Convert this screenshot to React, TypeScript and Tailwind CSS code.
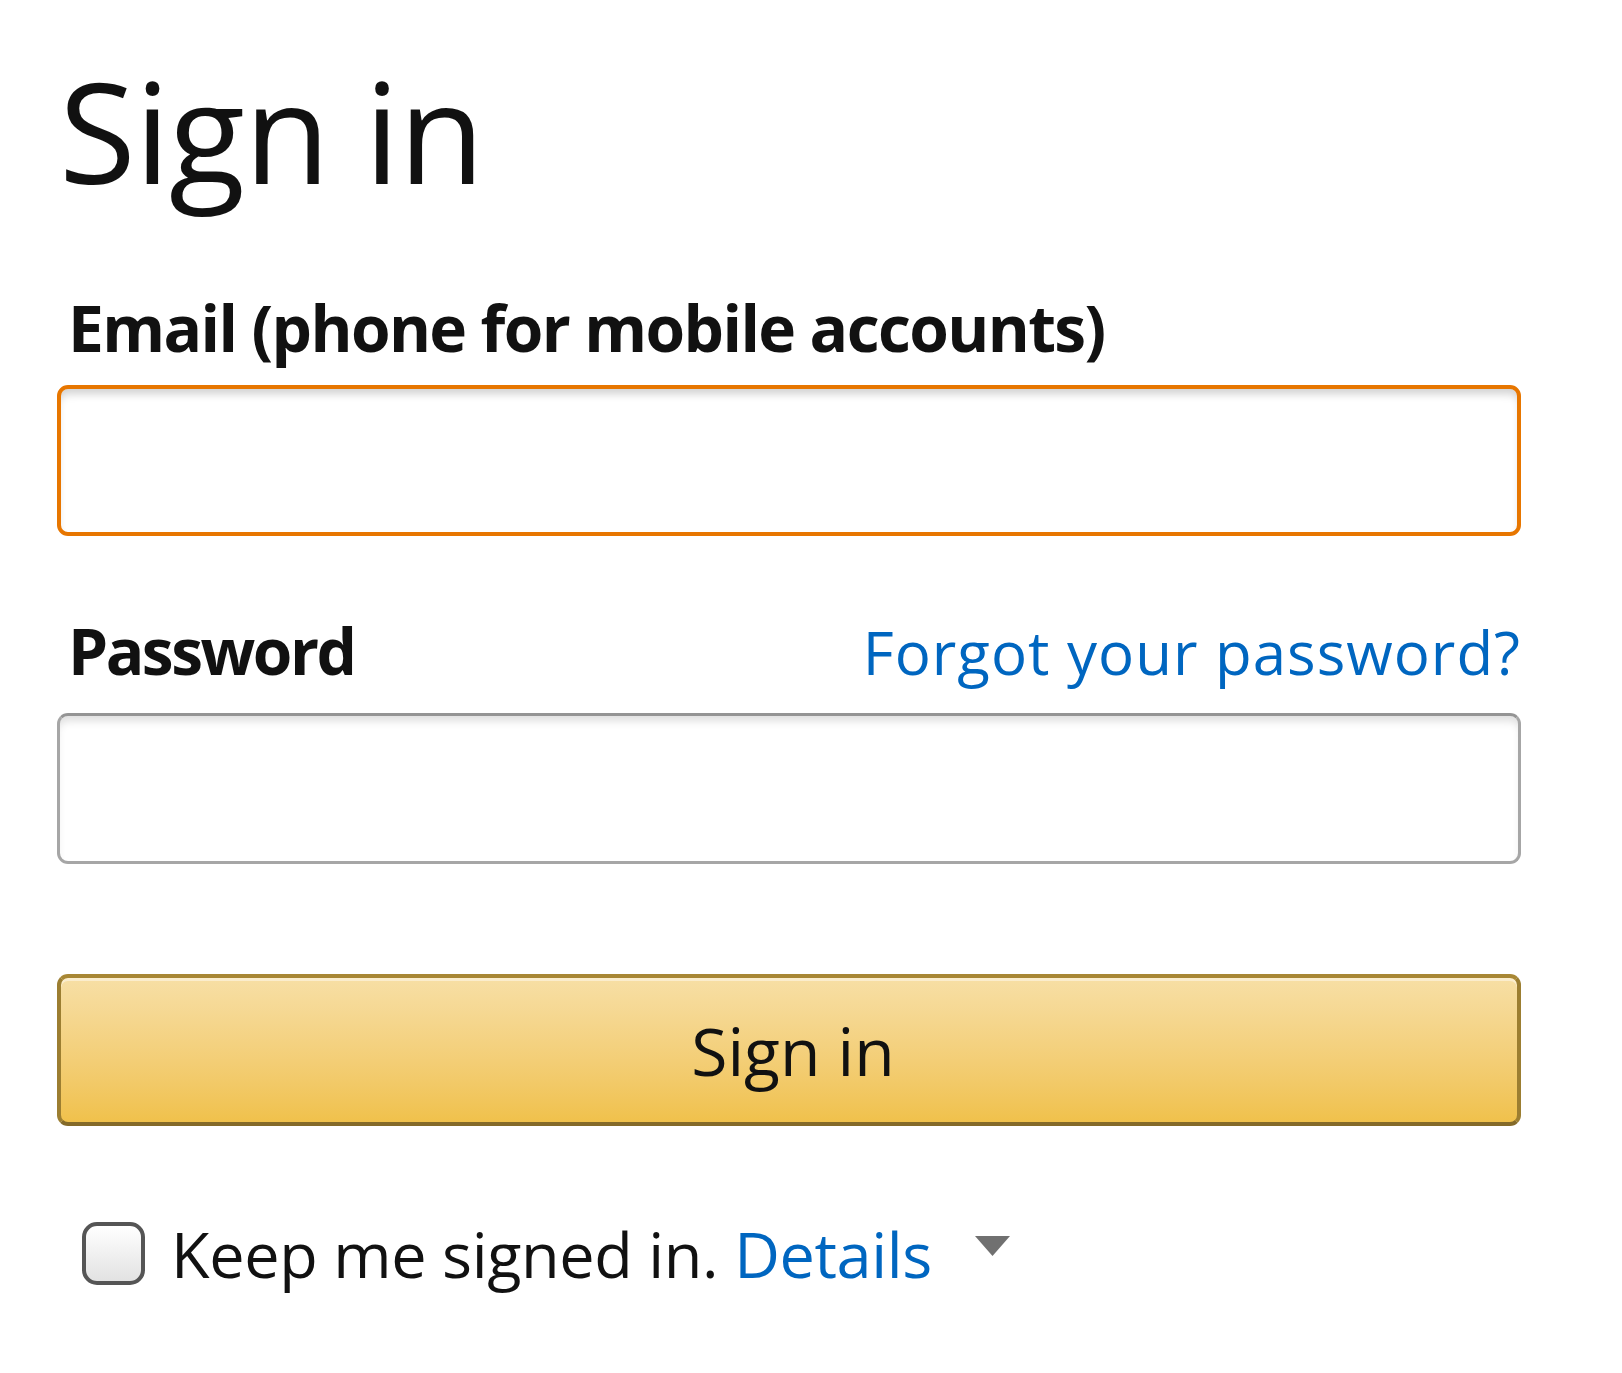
import React from "react";

export default function App() {
  return (
    <div
      className="w-[1622px] h-[1373px] bg-white text-[#111111]"
      style={{ fontFamily: '"Open Sans", "Noto Sans", sans-serif' }}
    >
      <div className="ml-[57px] w-[1464px] pt-[60px] flex flex-col">
        <h1 className="text-[140px] leading-[140px] font-normal pl-[2px] tracking-[-1px]">Sign in</h1>

        <label className="mt-[96px] text-[64px] leading-[64px] font-bold pl-[11px] tracking-[-1.6px]">
          Email (phone for mobile accounts)
        </label>
        <div className="mt-[25px] h-[151px] rounded-[11px] border-[4px] border-[#e77600] shadow-[inset_0_8px_8px_-3px_rgba(0,0,0,0.18)]" />

        <div className="mt-[83px] flex items-baseline justify-between">
          <span className="text-[64px] leading-[64px] font-bold pl-[11px] tracking-[-2.5px]">Password</span>
          <a className="text-[60px] leading-[64px] text-[#0066c0] tracking-[1px]">Forgot your password?</a>
        </div>
        <div className="mt-[29px] h-[151px] rounded-[11px] border-[3px] border-[#a6a6a6] border-t-[#949494] shadow-[inset_0_8px_8px_-3px_rgba(0,0,0,0.13)]" />

        <button className="mt-[110px] h-[152px] rounded-[11px] border-[4px] border-[#9c7e31] border-t-[#a88734] border-b-[#846a29] bg-gradient-to-b from-[#f7dfa5] to-[#f0c14b] shadow-[inset_0_3px_0_rgba(255,255,255,0.45)] flex items-center justify-center">
          <span className="text-[66px] leading-[66px] text-[#111111] pl-[8px]">Sign in</span>
        </button>

        <div className="mt-[96px] flex items-center pl-[25px]">
          <span className="w-[63px] h-[63px] rounded-[15px] border-[4px] border-[#555555] bg-gradient-to-b from-[#ffffff] to-[#e2e2e2] shrink-0" />
          <span className="ml-[26px] text-[63px] leading-[63px] tracking-[-0.4px]">
            Keep me signed in. <a className="text-[#0066c0]">Details</a>
          </span>
          <svg className="ml-[43px] mb-[16px]" width="35" height="20" viewBox="0 0 35 20">
            <path d="M0 0 L35 0 L17.5 20 Z" fill="#707070" />
          </svg>
        </div>
      </div>
    </div>
  );
}
